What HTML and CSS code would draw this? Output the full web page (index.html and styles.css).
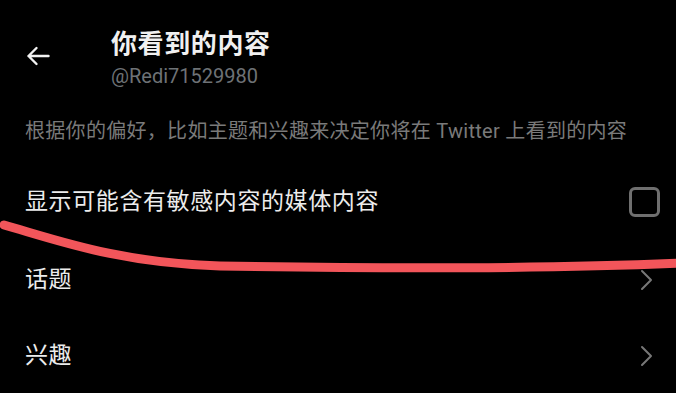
FILE: index.html
```html
<!DOCTYPE html>
<html lang="zh-CN">
<head>
<meta charset="utf-8">
<title>你看到的内容</title>
<link rel="stylesheet" href="styles.css">
</head>
<body>
<div class="page">
  <header class="header">
    <div class="back">
      <svg width="24" height="20" viewBox="0 0 24 20" fill="none" stroke="#f2f2f2" stroke-width="2.4" stroke-linecap="round" stroke-linejoin="round">
        <path d="M22.5 10H2.5M10.5 2L2.5 10L10.5 18"/>
      </svg>
    </div>
    <div class="titles">
      <div class="title">你看到的内容</div>
      <div class="handle">@Redi71529980</div>
    </div>
  </header>
  <p class="desc">根据你的偏好，比如主题和兴趣来决定你将在 Twitter 上看到的内容</p>
  <div class="row row-first">
    <span class="label">显示可能含有敏感内容的媒体内容</span>
    <span class="checkbox"></span>
  </div>
  <div class="row">
    <span class="label">话题</span>
    <svg class="chev" width="13" height="22" viewBox="0 0 13 22" fill="none" stroke="#777" stroke-width="2" stroke-linecap="round" stroke-linejoin="round"><path d="M2 2L11 11L2 20"/></svg>
  </div>
  <div class="row">
    <span class="label">兴趣</span>
    <svg class="chev" width="13" height="22" viewBox="0 0 13 22" fill="none" stroke="#777" stroke-width="2" stroke-linecap="round" stroke-linejoin="round"><path d="M2 2L11 11L2 20"/></svg>
  </div>
  <svg class="scribble" width="676" height="393" viewBox="0 0 676 393" fill="none">
    <path d="M4 225 C 60 241, 120 263, 220 266 C 400 269, 570 268, 684 263" stroke="#f2555a" stroke-width="9" stroke-linecap="round"/>
  </svg>
</div>
</body>
</html>
```
FILE: styles.css
```css
* { box-sizing: border-box; }
html, body {
  margin: 0;
  padding: 0;
  background: #000;
}
body {
  font-family: Roboto, "Noto Sans CJK SC", sans-serif;
  color: #ececec;
  width: 676px;
  height: 393px;
  overflow: hidden;
}
.page {
  position: relative;
  width: 676px;
  height: 393px;
}
.header {
  display: flex;
  padding-top: 29px;
}
.back {
  width: 111px;
  padding-left: 26px;
  padding-top: 17px;
  display: flex;
  align-items: flex-start;
}
.titles {
  display: flex;
  flex-direction: column;
  gap: 5px;
}
.title {
  font-size: 26px;
  line-height: 30px;
  font-weight: 700;
  letter-spacing: 0.6px;
  color: #f0f0f0;
}
.handle {
  font-size: 20px;
  line-height: 24px;
  color: #6e7276;
}
.desc {
  margin: 30px 0 0 0;
  padding-left: 25px;
  font-size: 20px;
  line-height: 26px;
  letter-spacing: 0.3px;
  color: #7a7a7a;
  white-space: nowrap;
}
.row {
  display: flex;
  align-items: center;
  justify-content: space-between;
  height: 76px;
  padding-left: 25px;
  padding-right: 23px;
}
.row-first {
  margin-top: 20px;
  margin-bottom: 2px;
  padding-right: 16px;
}
.label {
  font-size: 23px;
  line-height: 30px;
  letter-spacing: 0.6px;
  color: #ececec;
}
.checkbox {
  width: 31px;
  height: 30px;
  border: 3px solid #6f6f6f;
  border-radius: 6px;
}
.chev {
  display: block;
}
.scribble {
  position: absolute;
  left: 0;
  top: 0;
  pointer-events: none;
}
```
